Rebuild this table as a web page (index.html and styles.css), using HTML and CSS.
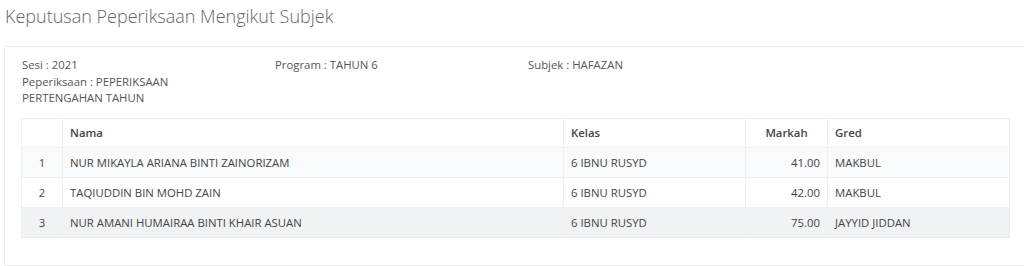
FILE: index.html
```html
<!DOCTYPE html>
<html>
<head>
<meta charset="utf-8">
<link rel="stylesheet" href="styles.css">
</head>
<body>
<h1 class="title">Keputusan Peperiksaan Mengikut Subjek</h1>
<div class="panel">
  <div class="info">
    <div class="info-col">Sesi : 2021<br>Peperiksaan : PEPERIKSAAN<br>PERTENGAHAN TAHUN</div>
    <div class="info-col">Program : TAHUN 6</div>
    <div class="info-col">Subjek : HAFAZAN</div>
  </div>
  <table class="results">
    <colgroup>
      <col class="c-no"><col class="c-nama"><col class="c-kelas"><col class="c-markah"><col class="c-gred">
    </colgroup>
    <thead>
      <tr><th></th><th>Nama</th><th>Kelas</th><th class="center">Markah</th><th>Gred</th></tr>
    </thead>
    <tbody>
      <tr class="odd"><td class="no">1</td><td>NUR MIKAYLA ARIANA BINTI ZAINORIZAM</td><td>6 IBNU RUSYD</td><td class="num">41.00</td><td>MAKBUL</td></tr>
      <tr><td class="no">2</td><td>TAQIUDDIN BIN MOHD ZAIN</td><td>6 IBNU RUSYD</td><td class="num">42.00</td><td>MAKBUL</td></tr>
      <tr class="hover"><td class="no">3</td><td>NUR AMANI HUMAIRAA BINTI KHAIR ASUAN</td><td>6 IBNU RUSYD</td><td class="num">75.00</td><td>JAYYID JIDDAN</td></tr>
    </tbody>
  </table>
</div>
</body>
</html>
```
FILE: styles.css
```css
html, body {
  margin: 0;
  padding: 0;
  background: #fff;
  overflow: hidden;
}
body {
  font-family: "Open Sans", "Liberation Sans", sans-serif;
  font-size: 11.35px;
  color: #444;
}
.title {
  font-size: 18px;
  font-weight: 300;
  color: #666;
  line-height: 24px;
  margin: 4px 0 0 5px;
}
.panel {
  margin: 18px 0 0 4px;
  width: 1022px;
  box-sizing: border-box;
  border: 1px solid #ececec;
  padding: 10px 16px 27px 16px;
}
.info {
  display: grid;
  grid-template-columns: 253px 253px 253px 1fr;
  line-height: 16.5px;
  color: #555;
  padding-left: 1px;
}
.results {
  margin-top: 11px;
  width: 989px;
  border-collapse: collapse;
  table-layout: fixed;
  border: 1px solid #e9ebee;
}
.c-no { width: 41px; }
.c-nama { width: 501px; }
.c-kelas { width: 182px; }
.c-markah { width: 82px; }
.c-gred { width: auto; }
.results th, .results td {
  border-left: 1px solid #eef0f2;
  padding: 0 7px;
  height: 29px;
  text-align: left;
  white-space: nowrap;
}
.results th {
  font-weight: 600;
  color: #444;
  height: 28.5px;
}
.results td {
  border-top: 1px solid #eef0f2;
}
.results .num { text-align: right; }
.results .center { text-align: center; }
.results .no { text-align: center; }
.results tr.odd td { background: #f9fafb; }
.results tr.hover td { background: #f1f2f4; }
```
